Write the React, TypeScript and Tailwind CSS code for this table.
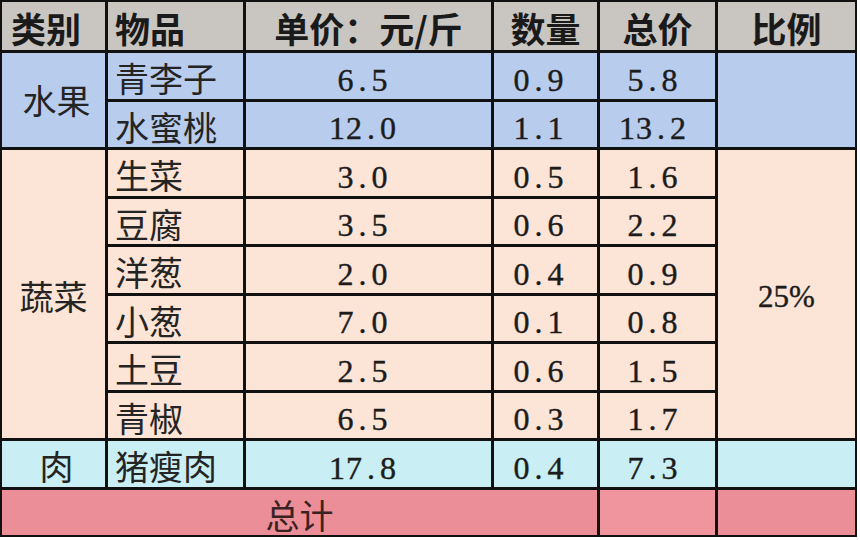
import React from "react";

const cjk = "font-['Noto_Sans_CJK_SC',sans-serif]";
const serif = "font-['Liberation_Serif','Noto_Sans_CJK_SC',serif] [-webkit-text-stroke:0.4px_#1c1c1c]";

const Num = ({ v }: { v: string }) => (
  <span className="inline-flex">
    {v.split("").map((c, i) => (
      <span key={i} className="inline-block w-[17px] text-center">
        {c}
      </span>
    ))}
  </span>
);

const blue = "bg-[#b8cced]";
const peach = "bg-[#fce4d6]";
const cyan = "bg-[#c9eef3]";
const pink = "bg-[#ec8e98]";
const gray = "bg-[#c9c5c1]";

type Row = { name: string; price: string; qty: string; total: string };

const veg: Row[] = [
  { name: "生菜", price: "3.0", qty: "0.5", total: "1.6" },
  { name: "豆腐", price: "3.5", qty: "0.6", total: "2.2" },
  { name: "洋葱", price: "2.0", qty: "0.4", total: "0.9" },
  { name: "小葱", price: "7.0", qty: "0.1", total: "0.8" },
  { name: "土豆", price: "2.5", qty: "0.6", total: "1.5" },
  { name: "青椒", price: "6.5", qty: "0.3", total: "1.7" },
];

const fruit: Row[] = [
  { name: "青李子", price: "6.5", qty: "0.9", total: "5.8" },
  { name: "水蜜桃", price: "12.0", qty: "1.1", total: "13.2" },
];

const meat: Row[] = [{ name: "猪瘦肉", price: "17.8", qty: "0.4", total: "7.3" }];

const numCls = `${serif} flex items-center justify-center pt-[8px] text-[32px] leading-none text-[#1c1c1c]`;

const ItemCells = ({ r, bg }: { r: Row; bg: string }) => (
  <>
    <div className={`${bg} ${cjk} flex items-center pl-[7px] pt-[5px] text-[34px] leading-none text-[#242424]`}>
      {r.name}
    </div>
    <div className={`${bg} ${numCls} pr-[12px]`}>
      <Num v={r.price} />
    </div>
    <div className={`${bg} ${numCls} pr-[14px]`}>
      <Num v={r.qty} />
    </div>
    <div className={`${bg} ${numCls} pr-[10px]`}>
      <Num v={r.total} />
    </div>
  </>
);

const headCls = `${gray} ${cjk} flex items-center pt-[3px] text-[35px] font-bold leading-none text-[#1a1a1a]`;

export default function App() {
  return (
    <div className="w-[860px] h-[540px] bg-white">
      <div className="grid w-[857px] h-[537px] grid-cols-[103px_135px_245px_103px_115px_137px] grid-rows-[48px_repeat(10,1fr)] gap-[3px] bg-[#111] p-[2px]">
        {/* header */}
        <div className={`${headCls} pl-[9px]`}>类别</div>
        <div className={`${headCls} pl-[7px]`}>物品</div>
        <div className={`${headCls} justify-center`}>单价：元/斤</div>
        <div className={`${headCls} justify-center`}>数量</div>
        <div className={`${headCls} justify-center`}>总价</div>
        <div className={`${headCls} justify-center`}>比例</div>

        {/* fruit */}
        <div className={`${blue} ${cjk} row-span-2 flex items-center justify-center pl-[6px] text-[34px] leading-none text-[#242424]`}>水果</div>
        <ItemCells r={fruit[0]} bg={blue} />
        <div className={`${blue} row-span-2`} />
        <ItemCells r={fruit[1]} bg={blue} />

        {/* vegetables */}
        <div className={`${peach} ${cjk} row-span-6 flex items-center justify-center pt-[3px] text-[34px] leading-none text-[#242424]`}>蔬菜</div>
        <ItemCells r={veg[0]} bg={peach} />
        <div className={`${peach} ${serif} row-span-6 flex items-center justify-center pt-[4px] text-[31px] leading-none text-[#1c1c1c]`}>25%</div>
        {veg.slice(1).map((r) => (
          <ItemCells key={r.name} r={r} bg={peach} />
        ))}

        {/* meat */}
        <div className={`${cyan} ${cjk} flex items-center justify-center pl-[6px] pt-[5px] text-[34px] leading-none text-[#242424]`}>肉</div>
        <ItemCells r={meat[0]} bg={cyan} />
        <div className={cyan} />

        {/* total */}
        <div className={`${pink} ${cjk} col-span-4 flex items-center justify-center pt-[5px] text-[34px] leading-none text-[#3a2222]`}>总计</div>
        <div className="bg-[#f0959d]" />
        <div className={pink} />
      </div>
    </div>
  );
}
